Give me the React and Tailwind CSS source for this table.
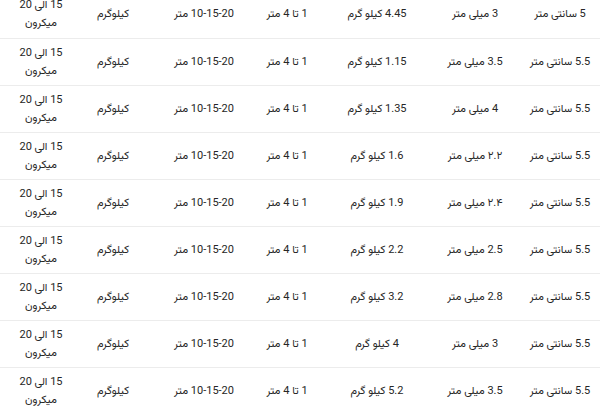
const rows = [
  ['5 سانتی متر', '3 میلی متر', '4.45 کیلو گرم'],
  ['5.5 سانتی متر', '3.5 میلی متر', '1.15 کیلو گرم'],
  ['5.5 سانتی متر', '4 میلی متر', '1.35 کیلو گرم'],
  ['5.5 سانتی متر', '۲.۲ میلی متر', '1.6 کیلو گرم'],
  ['5.5 سانتی متر', '۲.۴ میلی متر', '1.9 کیلو گرم'],
  ['5.5 سانتی متر', '2.5 میلی متر', '2.2 کیلو گرم'],
  ['5.5 سانتی متر', '2.8 میلی متر', '3.2 کیلو گرم'],
  ['5.5 سانتی متر', '3 میلی متر', '4 کیلو گرم'],
  ['5.5 سانتی متر', '3.5 میلی متر', '5.2 کیلو گرم'],
]

function Cell({ children, className = '' }) {
  return <td className={'whitespace-nowrap py-[5px] text-center align-middle ' + className}>{children}</td>
}

export default function App() {
  return (
    <div className="h-[409px] w-[600px] overflow-hidden bg-white" style={{ fontFamily: 'Roboto, Vazirmatn, "Noto Sans Arabic", sans-serif' }}>
      <table dir="rtl" className="-mt-[9px] w-[600px] table-fixed border-collapse text-[11px] leading-[18px] text-[#262626]">
        <colgroup>
          <col className="w-[80px]" />
          <col className="w-[90px]" />
          <col className="w-[106px]" />
          <col className="w-[74px]" />
          <col className="w-[92px]" />
          <col className="w-[90px]" />
          <col className="w-[68px]" />
        </colgroup>
        <tbody>
          {rows.map((r, i) => (
            <tr key={i} className="h-[47px] border-b border-[#ececec]">
              <Cell>{r[0]}</Cell>
              <Cell>{r[1]}</Cell>
              <Cell>{r[2]}</Cell>
              <Cell>1 تا 4 متر</Cell>
              <Cell>10-15-20 متر</Cell>
              <Cell>کیلوگرم</Cell>
              <Cell className="pl-[14px]">
                <div className="h-[18px]">15 الی 20</div>
                <div className="h-[18px]">میکرون</div>
              </Cell>
            </tr>
          ))}
        </tbody>
      </table>
    </div>
  )
}
